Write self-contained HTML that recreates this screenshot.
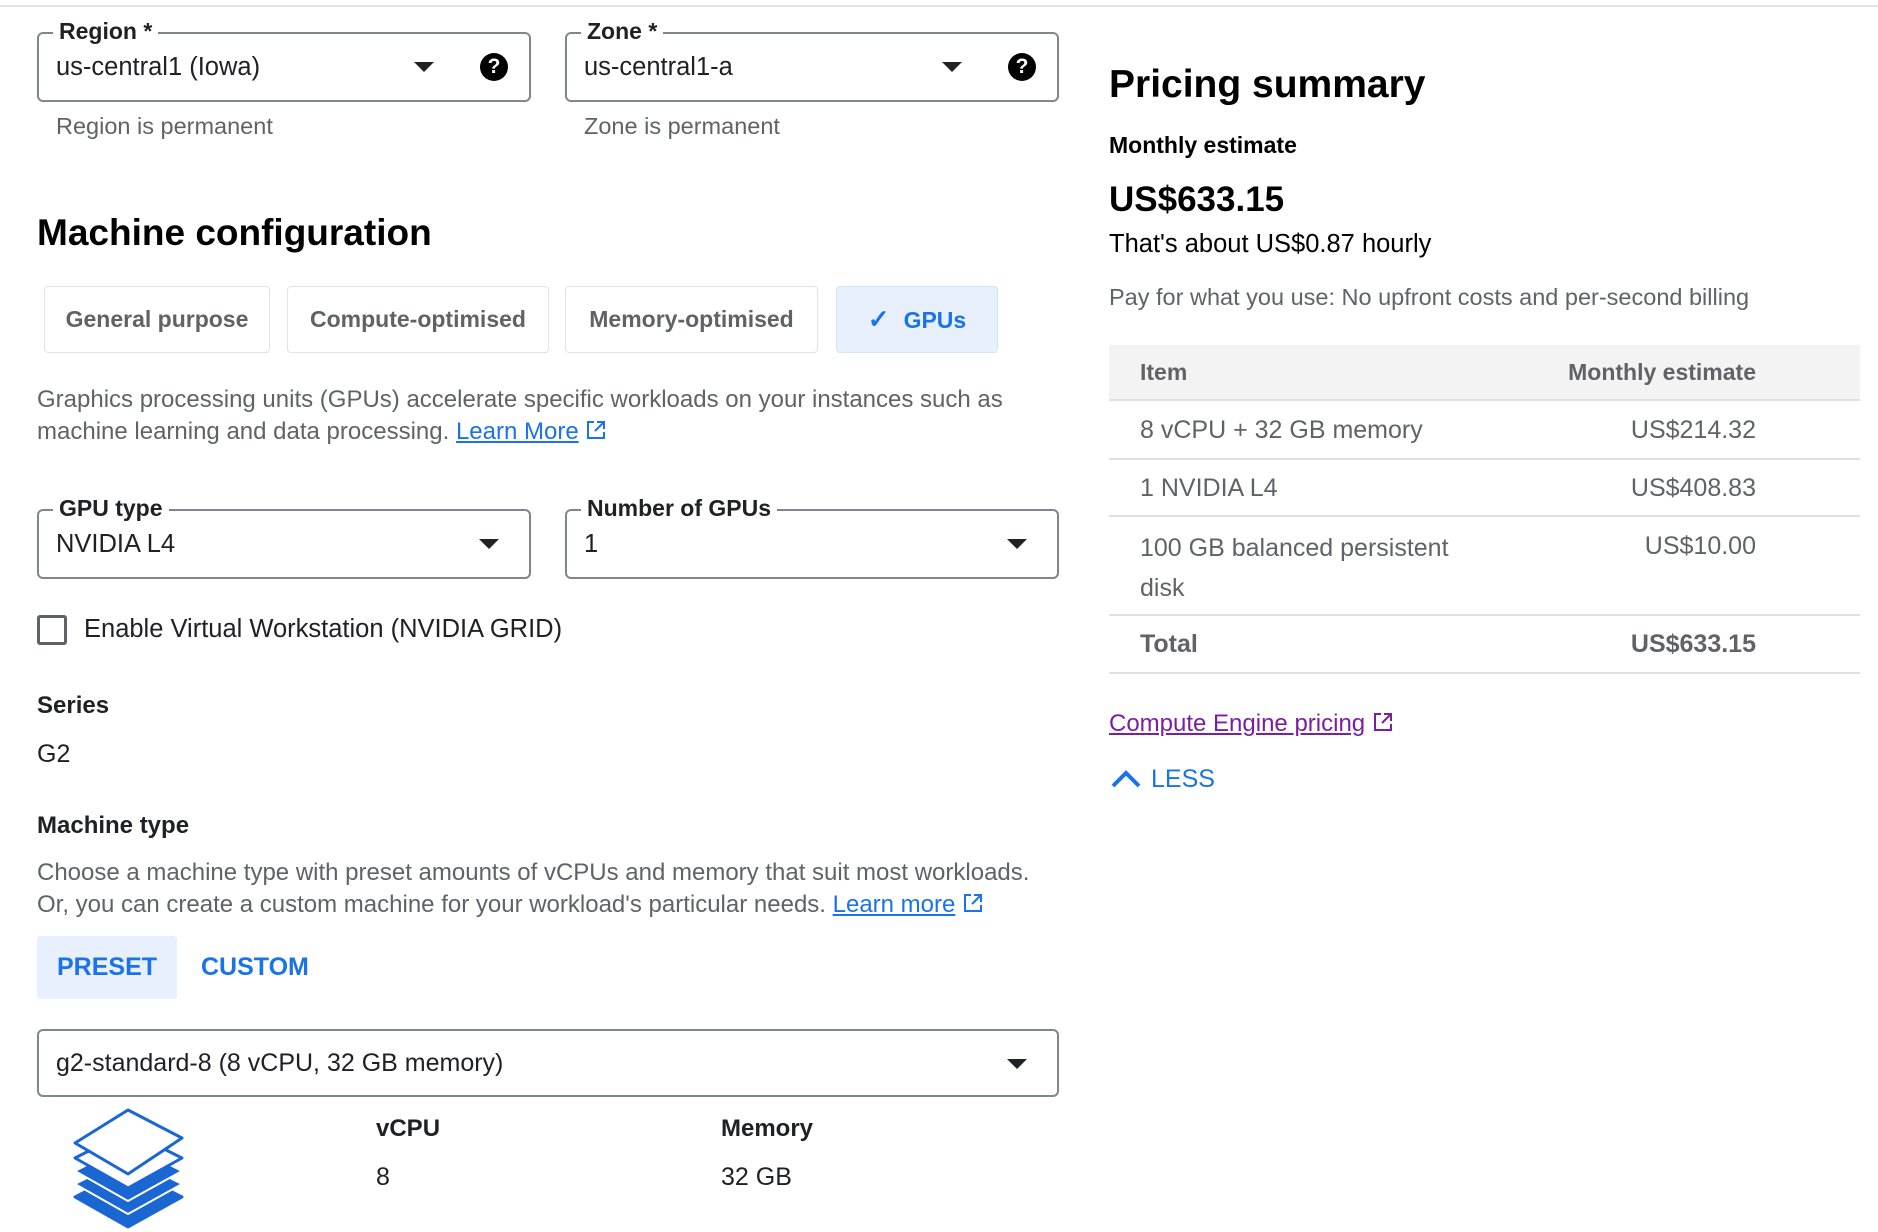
<!DOCTYPE html>
<html><head><meta charset="utf-8"><style>
*{box-sizing:border-box;margin:0;padding:0}
body{width:1878px;height:1232px;background:#fff;font-family:"Liberation Sans",Arial,sans-serif;color:#202124;position:relative;overflow:hidden}
.a{position:absolute;white-space:nowrap}
.box{position:absolute;border:2px solid #80868b;border-radius:6px;height:70px}
.lbl{position:absolute;top:-16px;left:14px;background:#fff;padding:0 6px;font-size:23px;color:#202124;font-weight:bold}
.val{position:absolute;left:17px;top:19px;font-size:25.5px}
.tri{position:absolute;width:0;height:0;border-left:10px solid transparent;border-right:10px solid transparent;border-top:10px solid #202124;top:28px}
.q{position:absolute;width:28px;height:28px;border-radius:50%;background:#000;color:#fff;font-weight:bold;font-size:21px;text-align:center;line-height:28px;top:19px}
.help{font-size:23.5px;color:#5f6368}
.chip{position:absolute;top:286px;height:67px;border:1px solid #e3e3e3;border-radius:4px;font-size:23px;font-weight:bold;color:#5f6368;text-align:center;line-height:65px}
.p{font-size:24px;color:#5f6368;line-height:32px}
.link{color:#1a73e8;text-decoration:underline}
.row{position:absolute;left:1109px;width:751px;border-bottom:2px solid #e0e0e0}
.t{font-size:25px;color:#5f6368}
.ext{display:inline-block;vertical-align:-2px}
</style></head><body>
<div class="a" style="left:0;top:5px;width:1878px;height:2px;background:#e3e3e3"></div>

<div class="box" style="left:37px;top:32px;width:494px"><div class="lbl">Region *</div><div class="val">us-central1 (Iowa)</div><div class="tri" style="left:375px"></div><div class="q" style="left:441px">?</div></div>
<div class="a help" style="left:56px;top:113px">Region is permanent</div>
<div class="box" style="left:565px;top:32px;width:494px"><div class="lbl">Zone *</div><div class="val">us-central1-a</div><div class="tri" style="left:375px"></div><div class="q" style="left:441px">?</div></div>
<div class="a help" style="left:584px;top:113px">Zone is permanent</div>

<div class="a" style="left:37px;top:212px;font-size:37px;font-weight:bold;color:#000">Machine configuration</div>

<div class="chip" style="left:44px;width:226px">General purpose</div>
<div class="chip" style="left:287px;width:262px">Compute-optimised</div>
<div class="chip" style="left:565px;width:253px">Memory-optimised</div>
<div class="chip" style="left:836px;width:162px;background:#e8f0fe;border-color:#d2e3fc;color:#1a73e8"><span style="font-size:26px;margin-right:14px">✓</span>GPUs</div>

<div class="a p" style="left:37px;top:384px">Graphics processing units (GPUs) accelerate specific workloads on your instances such as<br>machine learning and data processing. <span class="link">Learn More</span> <svg class="ext" width="22" height="22" viewBox="0 0 22 22"><path d="M9 3H3v16h16v-6M12 3h7v7M19 3l-9 9" fill="none" stroke="#1a73e8" stroke-width="2"/></svg></div>

<div class="box" style="left:37px;top:509px;width:494px"><div class="lbl">GPU type</div><div class="val">NVIDIA L4</div><div class="tri" style="left:440px"></div></div>
<div class="box" style="left:565px;top:509px;width:494px"><div class="lbl">Number of GPUs</div><div class="val">1</div><div class="tri" style="left:440px"></div></div>

<div class="a" style="left:37px;top:615px;width:30px;height:30px;border:3px solid #5f6368;border-radius:3px"></div>
<div class="a" style="left:84px;top:615px;font-size:25.5px">Enable Virtual Workstation (NVIDIA GRID)</div>

<div class="a" style="left:37px;top:692px;font-size:24px;font-weight:bold">Series</div>
<div class="a" style="left:37px;top:740px;font-size:25px">G2</div>
<div class="a" style="left:37px;top:812px;font-size:24px;font-weight:bold">Machine type</div>
<div class="a p" style="left:37px;top:857px">Choose a machine type with preset amounts of vCPUs and memory that suit most workloads.<br>Or, you can create a custom machine for your workload's particular needs. <span class="link">Learn more</span> <svg class="ext" width="22" height="22" viewBox="0 0 22 22"><path d="M9 3H3v16h16v-6M12 3h7v7M19 3l-9 9" fill="none" stroke="#1a73e8" stroke-width="2"/></svg></div>

<div class="a" style="left:37px;top:936px;width:140px;height:63px;background:#e8f0fe;border-radius:3px;color:#1a73e8;font-size:25px;font-weight:bold;text-align:center;line-height:63px">PRESET</div>
<div class="a" style="left:201px;top:953px;color:#1a73e8;font-size:25px;font-weight:bold">CUSTOM</div>

<div class="box" style="left:37px;top:1029px;width:1022px;height:68px"><div class="val" style="top:18px;font-size:25px">g2-standard-8 (8 vCPU, 32 GB memory)</div><div class="tri" style="left:968px"></div></div>

<svg class="a" style="left:70px;top:1105px" width="118" height="127" viewBox="70 1105 118 127">
<g fill="#1a66d2" stroke="#1a66d2" stroke-width="3" stroke-linejoin="round">
<path d="M75 1197 L128 1227 L182 1197 L128 1170 Z"/>
<path d="M75 1184 L128 1214 L182 1184 L128 1157 Z" stroke="#fff" stroke-width="2"/>
<path d="M75 1171 L128 1201 L182 1171 L128 1144 Z" stroke="#fff" stroke-width="2"/>
</g>
<path d="M75 1158 L128 1188 L182 1158 L128 1131 Z" fill="#fff" stroke="#1a66d2" stroke-width="3" stroke-linejoin="round"/>
<path d="M75 1143 L128 1174 L182 1138 L128 1110 Z" fill="#fff" stroke="#1a66d2" stroke-width="3" stroke-linejoin="round"/>
</svg>
<div class="a" style="left:376px;top:1115px;font-size:24px;font-weight:bold">vCPU</div>
<div class="a" style="left:376px;top:1163px;font-size:25px">8</div>
<div class="a" style="left:721px;top:1115px;font-size:24px;font-weight:bold">Memory</div>
<div class="a" style="left:721px;top:1163px;font-size:25px">32 GB</div>

<div class="a" style="left:1109px;top:63px;font-size:39px;font-weight:bold;color:#000">Pricing summary</div>
<div class="a" style="left:1109px;top:132px;font-size:23px;font-weight:bold;color:#000">Monthly estimate</div>
<div class="a" style="left:1109px;top:180px;font-size:35px;font-weight:bold;color:#000">US$633.15</div>
<div class="a" style="left:1109px;top:230px;font-size:25.5px;color:#000">That's about US$0.87 hourly</div>
<div class="a" style="left:1109px;top:284px;font-size:23.5px;color:#5f6368">Pay for what you use: No upfront costs and per-second billing</div>

<div class="row" style="top:345px;height:56px;background:#f3f3f3"></div>
<div class="a t" style="left:1140px;top:359px;font-weight:bold;font-size:23px">Item</div>
<div class="a t" style="right:122px;top:359px;font-weight:bold;font-size:23px">Monthly estimate</div>
<div class="row" style="top:401px;height:59px"></div>
<div class="a t" style="left:1140px;top:416px">8 vCPU + 32 GB memory</div>
<div class="a t" style="right:122px;top:416px">US$214.32</div>
<div class="row" style="top:460px;height:57px"></div>
<div class="a t" style="left:1140px;top:474px">1 NVIDIA L4</div>
<div class="a t" style="right:122px;top:474px">US$408.83</div>
<div class="row" style="top:517px;height:99px"></div>
<div class="a t" style="left:1140px;top:528px;line-height:40px">100 GB balanced persistent<br>disk</div>
<div class="a t" style="right:122px;top:532px">US$10.00</div>
<div class="row" style="top:616px;height:58px"></div>
<div class="a t" style="left:1140px;top:630px;font-weight:bold">Total</div>
<div class="a t" style="right:122px;top:630px;font-weight:bold">US$633.15</div>

<div class="a" style="left:1109px;top:710px;font-size:24px;color:#7b1fa2"><span style="text-decoration:underline">Compute Engine pricing</span> <svg class="ext" width="22" height="22" viewBox="0 0 22 22"><path d="M9 3H3v16h16v-6M12 3h7v7M19 3l-9 9" fill="none" stroke="#7b1fa2" stroke-width="2"/></svg></div>
<svg class="a" style="left:1110px;top:768px" width="32" height="22"><path d="M3 18 L16 5 L29 18" fill="none" stroke="#1a73e8" stroke-width="4"/></svg>
<div class="a" style="left:1151px;top:765px;font-size:25px;color:#1a73e8">LESS</div>
</body></html>
